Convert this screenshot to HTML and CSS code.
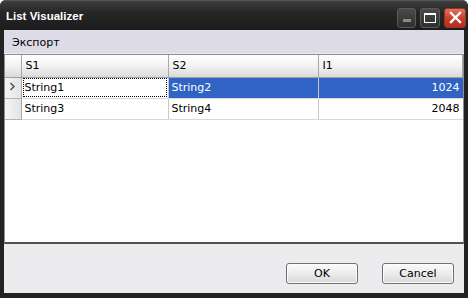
FILE: index.html
```html
<!DOCTYPE html>
<html lang="ru">
<head>
    <meta charset="UTF-8">
    <title>List Visualizer</title>
    <link rel="stylesheet" href="styles.css">
</head>
<body>
    <div class="window">
        <div class="titlebar">
            <span class="title">List Visualizer</span>
            <div class="caption-buttons">
                <div class="cap-btn cap-min"><span class="dash"></span></div>
                <div class="cap-btn cap-max"><span class="box"></span></div>
                <div class="cap-btn cap-close">
                    <svg width="13" height="13" viewBox="0 0 13 13">
                        <path d="M2 2 L11 11 M11 2 L2 11" stroke="#fff" stroke-width="2.4" stroke-linecap="square"/>
                    </svg>
                </div>
            </div>
        </div>
        <div class="client">
            <div class="menubar">
                <span class="menu-item">Экспорт</span>
            </div>
            <div class="grid">
                <table>
                    <colgroup>
                        <col class="col-rowhead">
                        <col class="col-s1">
                        <col class="col-s2">
                        <col>
                    </colgroup>
                    <tr class="head">
                        <th class="rowhead"></th>
                        <th>S1</th>
                        <th>S2</th>
                        <th>I1</th>
                    </tr>
                    <tr class="selected">
                        <td class="rowhead">
                            <svg width="7" height="9" viewBox="0 0 7 9">
                                <path d="M1.5 1 L5 4.5 L1.5 8" fill="none" stroke="#555" stroke-width="1.6"/>
                            </svg>
                        </td>
                        <td class="focus"><span>String1</span></td>
                        <td>String2</td>
                        <td class="num">1024</td>
                    </tr>
                    <tr>
                        <td class="rowhead"></td>
                        <td>String3</td>
                        <td>String4</td>
                        <td class="num">2048</td>
                    </tr>
                </table>
            </div>
            <div class="footer">
                <button class="btn">OK</button>
                <button class="btn">Cancel</button>
            </div>
        </div>
    </div>
</body>
</html>
```

FILE: styles.css
```css
* {
    box-sizing: border-box;
    margin: 0;
    padding: 0;
}

body {
    font-family: "DejaVu Sans", Verdana, sans-serif;
    font-size: 11px;
    color: #000;
    background: #fff;
}

.window {
    width: 468px;
    height: 298px;
    display: flex;
    flex-direction: column;
    background: #232323;
    border-radius: 6px 6px 0 0;
    overflow: hidden;
}

.titlebar {
    height: 30px;
    display: flex;
    align-items: center;
    justify-content: space-between;
    padding: 0 2px 0 6px;
    background: linear-gradient(#3e3e3e, #262626 40%, #1c1c1c);
    border-top: 1px solid #555;
}

.title {
    color: #fff;
    font-family: "Liberation Sans", Arial, sans-serif;
    font-weight: bold;
    font-size: 11.5px;
    padding-top: 1px;
}

.caption-buttons {
    display: flex;
    gap: 4px;
    padding-top: 4px;
}

.cap-btn {
    width: 19px;
    height: 20px;
    border: 1px solid #5a5a5a;
    border-radius: 3px;
    background: linear-gradient(#4a4a4a, #2e2e2e);
    display: flex;
    align-items: center;
    justify-content: center;
}

.cap-max {
    width: 20px;
}

.cap-min {
    align-items: flex-end;
    justify-content: flex-start;
    padding: 0 0 5px 5px;
}

.dash {
    width: 8px;
    height: 3px;
    background: #8a8a8a;
}

.box {
    width: 12px;
    height: 10px;
    border: 1px solid #fff;
    border-top-width: 2px;
}

.cap-close {
    width: 22px;
    border-color: #8a3a30;
    background: linear-gradient(#e8705c, #c73a26 55%, #b8301e);
}

.client {
    flex: 1;
    display: flex;
    flex-direction: column;
    margin: 0 4px 5px 4px;
    background: #ececee;
}

.menubar {
    height: 23px;
    display: flex;
    align-items: center;
    padding-left: 8px;
    background: #dcdbe7;
}

.menu-item {
    padding-top: 1px;
}

.grid {
    height: 190px;
    margin: 1px 0 0 0;
    background: #fff;
    border: 1px solid #8e8e8e;
    border-bottom: 2px solid #505050;
}

table {
    border-collapse: collapse;
    table-layout: fixed;
    width: 100%;
}

.col-rowhead {
    width: 16px;
}

.col-s1 {
    width: 147px;
}

.col-s2 {
    width: 150px;
}

th, td {
    height: 21px;
    padding: 0 3px;
    border-right: 1px solid #c8c8c8;
    border-bottom: 1px solid #d8d8d8;
    text-align: left;
    white-space: nowrap;
    overflow: hidden;
    font-weight: normal;
}

tr.head th {
    height: 22px;
    padding-left: 4px;
    background: linear-gradient(#ffffff, #f2f2f2 50%, #d9d9d9);
    border-bottom: 1px solid #a0a0a0;
    border-right: 1px solid #a8a8a8;
}

th:last-child, td:last-child {
    border-right: none;
}

.rowhead {
    padding: 0 0 0 4px;
    background: linear-gradient(90deg, #f6f6f6, #e2e2e2);
    border-right: 1px solid #a8a8a8;
}

td.rowhead {
    border-bottom: 1px solid #b4b4b4;
}

.num {
    text-align: right;
}

tr.selected td {
    background: #3163c5;
    color: #fff;
}

tr.selected td.rowhead {
    background: linear-gradient(90deg, #f6f6f6, #e2e2e2);
}

tr.selected td.focus {
    background: #fff;
    color: #000;
    padding: 0 1px;
}

.focus span {
    display: block;
    height: 19px;
    line-height: 17px;
    padding-left: 1px;
    border: 1px dotted #000;
}

.footer {
    flex: 1;
    display: flex;
    justify-content: flex-end;
    align-items: flex-start;
    gap: 24px;
    padding: 19px 10px 0 0;
    background: #ececee;
}

.btn {
    width: 72px;
    height: 21px;
    font-family: inherit;
    font-size: 11px;
    color: #000;
    border: 1px solid #707070;
    border-radius: 3px;
    background: linear-gradient(#fbfbfb, #ececec 50%, #d9d9d9);
    box-shadow: inset 0 0 0 1px #fdfdfd;
}
```
